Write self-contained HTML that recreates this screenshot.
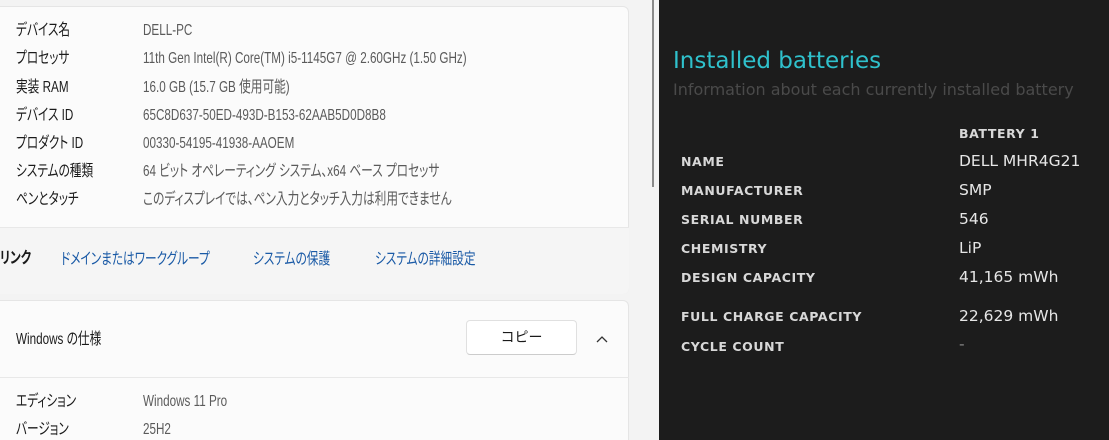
<!DOCTYPE html>
<html><head><meta charset="utf-8"><style>
html,body{margin:0;width:1109px;height:440px;overflow:hidden}
body{background:#f3f3f3;position:relative;font-family:"Liberation Sans","Noto Sans CJK JP",sans-serif;}
.card{position:absolute;left:-10px;width:639px;background:#fbfbfb;border:1px solid #e5e5e5;border-radius:6px;box-sizing:border-box}
.row,.val{position:absolute;left:16px;font-size:16px;line-height:20px;color:#1a1a1a;white-space:nowrap;transform:scaleX(0.73);transform-origin:0 0;font-feature-settings:"palt"}
.val{left:143px;color:#5a5a5a}
.dark{position:absolute;left:659px;top:0;width:450px;height:440px;background:#1c1c1c}
.k{position:absolute;left:22px;font-weight:bold;color:#d8d8d8;letter-spacing:0.6px;font-family:"DejaVu Sans","Liberation Sans",sans-serif;font-size:12.5px}
.v{position:absolute;left:300px;color:#e6e6e6;font-family:"DejaVu Sans","Liberation Sans",sans-serif;font-size:15.5px}
</style></head><body>
<div class="card" style="top:6px;height:288px;"></div>
<div style="position:absolute;left:-10px;top:227px;width:639px;height:66px;background:#f5f5f5;border-top:1px solid #e8e8e8;border-radius:0 0 6px 6px"></div>
<div class="row" style="top:21px">デバイス名</div><div class="val" style="top:21px">DELL-PC</div>
<div class="row" style="top:49px">プロセッサ</div><div class="val" style="top:49px">11th Gen Intel(R) Core(TM) i5-1145G7 @ 2.60GHz (1.50 GHz)</div>
<div class="row" style="top:78px">実装 RAM</div><div class="val" style="top:78px">16.0 GB (15.7 GB 使用可能)</div>
<div class="row" style="top:106px">デバイス ID</div><div class="val" style="top:106px">65C8D637-50ED-493D-B153-62AAB5D0D8B8</div>
<div class="row" style="top:134px">プロダクト ID</div><div class="val" style="top:134px">00330-54195-41938-AAOEM</div>
<div class="row" style="top:162px">システムの種類</div><div class="val" style="top:162px">64 ビット オペレーティング システム、x64 ベース プロセッサ</div>
<div class="row" style="top:190px">ペンとタッチ</div><div class="val" style="top:190px">このディスプレイでは、ペン入力とタッチ入力は利用できません</div>
<div class="row" style="top:249px;left:0;font-weight:bold">リンク</div>
<div class="row" style="top:250px;left:61px;color:#1a5aa6">ドメインまたはワークグループ</div>
<div class="row" style="top:250px;left:253px;color:#1a5aa6">システムの保護</div>
<div class="row" style="top:250px;left:375px;color:#1a5aa6">システムの詳細設定</div>
<div class="card" style="top:300px;height:160px;"></div>
<div style="position:absolute;left:-10px;top:377px;width:639px;height:1px;background:#e8e8e8"></div>
<div class="row" style="top:330px">Windows の仕様</div>
<div style="position:absolute;left:466px;top:320px;width:111px;height:35px;background:#fff;border:1px solid #e0e0e0;border-bottom-color:#ccc;border-radius:4px;box-sizing:border-box;text-align:center;line-height:33px;font-size:14px;color:#1a1a1a">コピー</div>
<svg style="position:absolute;left:595px;top:334px" width="14" height="10"><path d="M2 8 L7 3 L12 8" fill="none" stroke="#333" stroke-width="1.3"/></svg>
<div class="row" style="top:392px">エディション</div><div class="val" style="top:392px">Windows 11 Pro</div>
<div class="row" style="top:420px">バージョン</div><div class="val" style="top:420px">25H2</div>
<div style="position:absolute;left:652px;top:0;width:2px;height:187px;background:#8a8a8a"></div>
<div class="dark">
<div style="position:absolute;left:14px;top:48px;font-size:23px;color:#2fc1cc;font-family:'DejaVu Sans',sans-serif;">Installed batteries</div>
<div style="position:absolute;left:14px;top:80px;font-size:16px;color:#4a4a4a;font-family:'DejaVu Sans',sans-serif;">Information about each currently installed battery</div>
<div class="k" style="left:300px;top:126px">BATTERY 1</div>
<div class="k" style="top:154px">NAME</div><div class="v" style="top:152px">DELL MHR4G21</div>
<div class="k" style="top:183px">MANUFACTURER</div><div class="v" style="top:181px">SMP</div>
<div class="k" style="top:212px">SERIAL NUMBER</div><div class="v" style="top:210px">546</div>
<div class="k" style="top:241px">CHEMISTRY</div><div class="v" style="top:239px">LiP</div>
<div class="k" style="top:270px">DESIGN CAPACITY</div><div class="v" style="top:268px">41,165 mWh</div>
<div class="k" style="top:309px">FULL CHARGE CAPACITY</div><div class="v" style="top:307px">22,629 mWh</div>
<div class="k" style="top:339px">CYCLE COUNT</div><div class="v" style="top:335px;color:#888">-</div>
</div>
</body></html>
